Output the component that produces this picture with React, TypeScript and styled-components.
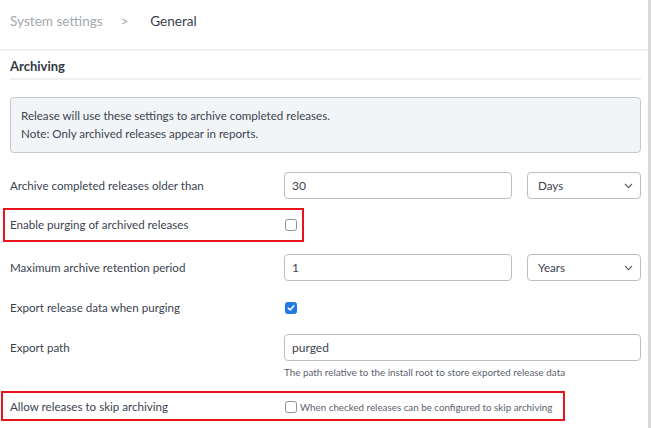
import React from "react";
import styled, { createGlobalStyle } from "styled-components";

const GlobalStyle = createGlobalStyle`
  html, body { margin: 0; padding: 0; background: #fff; }
  body { font-family: Lato, "Noto Sans", sans-serif; color: #3c4350; }
  * { box-sizing: border-box; }
`;

const Page = styled.div`
  display: flex;
  width: 651px;
  min-height: 428px;
  background: #fff;
`;

const Main = styled.div`
  flex: 1;
  display: flex;
  flex-direction: column;
`;

const ScrollStrip = styled.div`
  width: 4px;
  flex-shrink: 0;
  background: #d9d9db;
`;

const Header = styled.div`
  flex-shrink: 0;
  height: 51px;
  display: flex;
  align-items: center;
  padding: 0 10px 8px;
  border-bottom: 2px solid #eef0f3;
  font-size: 13.6px;
`;

const Crumb = styled.span<{ $active?: boolean }>`
  color: ${(p) => (p.$active ? "#3b4250" : "#a3a8b0")};
`;

const Sep = styled.span`
  color: #a3a8b0;
  margin: 0 22px 0 18px;
  font-size: 13px;
`;

const Content = styled.div`
  padding: 0 7px 0 10px;
`;

const SectionTitle = styled.div`
  height: 29px;
  padding-top: 7px;
  font-size: 13px;
  font-weight: 700;
  color: #333a46;
  border-bottom: 2px solid #eef0f3;
`;

const InfoBox = styled.div`
  margin-top: 17px;
  height: 56px;
  padding: 9px 10px;
  background: #f2f5f7;
  border: 1px solid #c4c9cf;
  border-radius: 4px;
  font-size: 11.6px;
  line-height: 18px;
  color: #3c4350;
`;

const Form = styled.div`
  display: flex;
  flex-direction: column;
  margin-top: 19px;
`;

const Row = styled.div<{ $mt?: number; $top?: boolean }>`
  position: relative;
  display: grid;
  grid-template-columns: 259px 228px 114px;
  column-gap: 15px;
  align-items: ${(p) => (p.$top ? "start" : "center")};
  min-height: 27px;
  margin-top: ${(p) => p.$mt ?? 0}px;
`;

const Highlight = styled.div<{ $l: number; $r: number; $t: number; $b: number }>`
  position: absolute;
  left: ${(p) => p.$l}px;
  width: ${(p) => p.$r}px;
  top: ${(p) => p.$t}px;
  bottom: ${(p) => p.$b}px;
  border: 2px solid #e8141c;
  pointer-events: none;
`;

const Label = styled.div`
  font-size: 11.6px;
  color: #3c4350;
  line-height: 27px;
`;

const FieldStack = styled.div`
  grid-column: 2 / 4;
  display: flex;
  flex-direction: column;
`;

const TextField = styled.div<{ $wide?: boolean }>`
  grid-column: ${(p) => (p.$wide ? "2 / 4" : "2 / 3")};
  height: 27px;
  border: 1px solid #b9bfc7;
  border-radius: 4px;
  padding: 0 7px;
  display: flex;
  align-items: center;
  font-size: 12px;
  color: #3c4350;
`;

const SelectBox = styled.div`
  height: 27px;
  border: 1px solid #b9bfc7;
  border-radius: 4px;
  padding: 0 7px 0 10px;
  display: flex;
  align-items: center;
  justify-content: space-between;
  font-size: 11.6px;
  color: #3c4350;
`;

const CheckCell = styled.div<{ $wide?: boolean }>`
  grid-column: ${(p) => (p.$wide ? "2 / 4" : "2 / 3")};
  display: flex;
  align-items: center;
  gap: 3px;
`;

const Box = styled.span<{ $checked?: boolean }>`
  width: 12px;
  height: 12px;
  flex-shrink: 0;
  border-radius: 2.5px;
  border: 1px solid ${(p) => (p.$checked ? "#1f7ae8" : "#8b9098")};
  background: ${(p) => (p.$checked ? "#1f7ae8" : "#fff")};
  display: inline-flex;
  align-items: center;
  justify-content: center;
  margin-left: 1px;
`;

const CheckText = styled.span`
  font-size: 9.8px;
  color: #5b626d;
`;

const Hint = styled.div`
  font-size: 9.85px;
  line-height: 12px;
  color: #5b626d;
  margin-top: 5px;
`;

const Checkbox: React.FC<{ checked?: boolean }> = ({ checked }) => (
  <Box $checked={checked}>
    {checked && (
      <svg width="8" height="8" viewBox="0 0 8 8">
        <path d="M1.3 4.2 L3.2 6 L6.8 1.8" fill="none" stroke="#fff" strokeWidth="1.6" strokeLinecap="round" strokeLinejoin="round" />
      </svg>
    )}
  </Box>
);

const Chevron = () => (
  <svg width="9" height="6" viewBox="0 0 9 6">
    <path d="M1 1 L4.5 4.6 L8 1" fill="none" stroke="#5a616b" strokeWidth="1.1" />
  </svg>
);

const Select: React.FC<{ value: string }> = ({ value }) => (
  <SelectBox>
    <span>{value}</span>
    <Chevron />
  </SelectBox>
);

export default function App() {
  return (
    <Page>
      <GlobalStyle />
      <Main>
        <Header>
          <Crumb>System settings</Crumb>
          <Sep>&gt;</Sep>
          <Crumb $active>General</Crumb>
        </Header>
        <Content>
          <SectionTitle>Archiving</SectionTitle>
          <InfoBox>
            Release will use these settings to archive completed releases.
            <br />
            Note: Only archived releases appear in reports.
          </InfoBox>
          <Form>
            <Row>
              <Label>Archive completed releases older than</Label>
              <TextField>30</TextField>
              <Select value="Days" />
            </Row>
            <Row $mt={12}>
              <Label>Enable purging of archived releases</Label>
              <CheckCell>
                <Checkbox />
              </CheckCell>
              <Highlight $l={-7} $r={301} $t={-3} $b={-4} />
            </Row>
            <Row $mt={16}>
              <Label>Maximum archive retention period</Label>
              <TextField>1</TextField>
              <Select value="Years" />
            </Row>
            <Row $mt={13}>
              <Label>Export release data when purging</Label>
              <CheckCell>
                <Checkbox checked />
              </CheckCell>
            </Row>
            <Row $mt={13} $top>
              <Label>Export path</Label>
              <FieldStack>
                <TextField>purged</TextField>
                <Hint>The path relative to the install root to store exported release data</Hint>
              </FieldStack>
            </Row>
            <Row $mt={15}>
              <Label>Allow releases to skip archiving</Label>
              <CheckCell $wide>
                <Checkbox />
                <CheckText>When checked releases can be configured to skip archiving</CheckText>
              </CheckCell>
              <Highlight $l={-9} $r={564} $t={-2} $b={-1} />
            </Row>
          </Form>
        </Content>
      </Main>
      <ScrollStrip />
    </Page>
  );
}
